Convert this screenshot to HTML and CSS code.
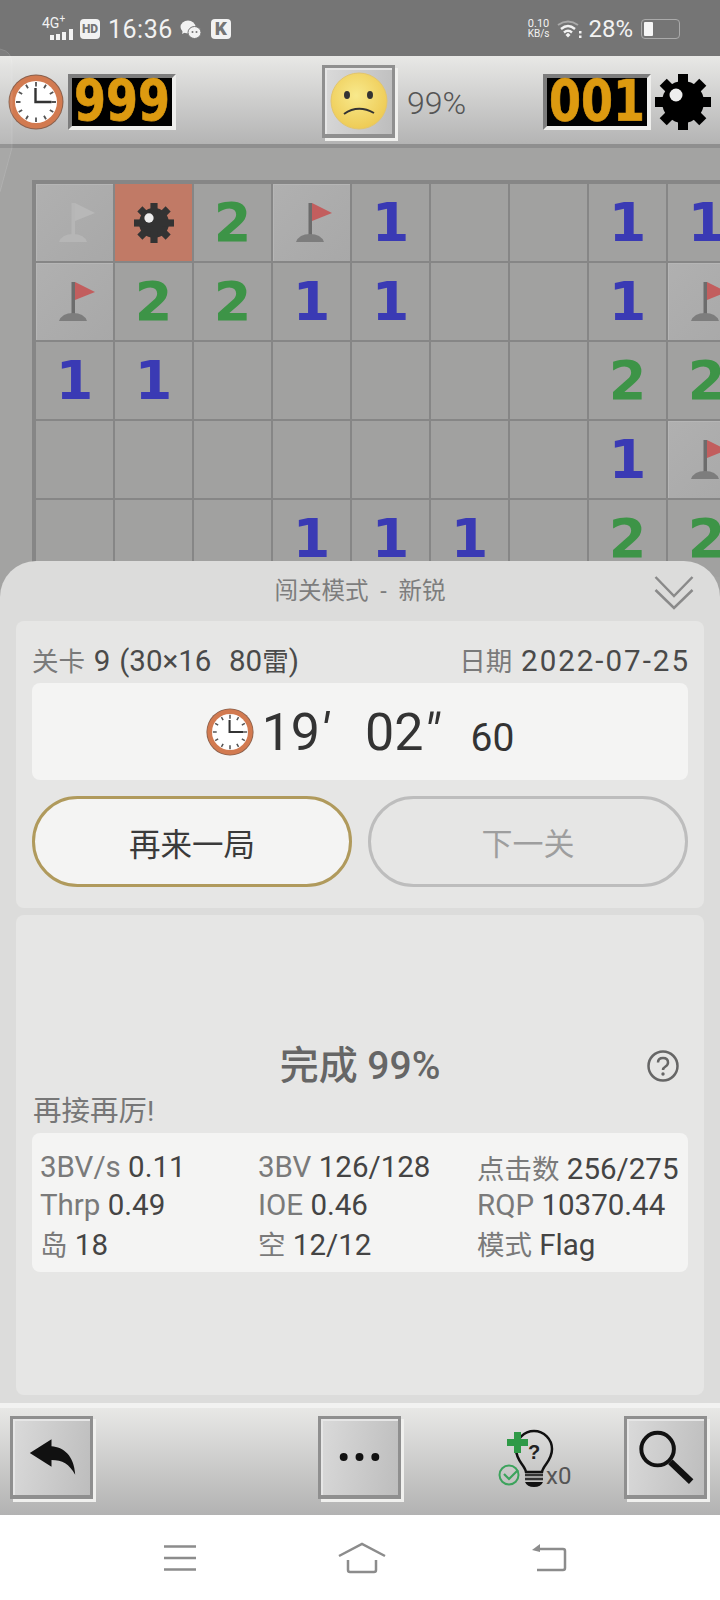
FILE: index.html
```html
<!DOCTYPE html>
<html lang="zh-CN">
<head>
  <meta charset="UTF-8" />
  <title>扫雷</title>
  <link rel="stylesheet" href="styles.css">
</head>
<body>
  <svg class="defs" width="0" height="0">
    <defs>
      <radialGradient id="face" cx="0.45" cy="0.4" r="0.6">
        <stop offset="0" stop-color="#f8e98c"/>
        <stop offset="1" stop-color="#eecb55"/>
      </radialGradient>
    </defs>
    <symbol id="clock" viewBox="0 0 56 56">
      <circle cx="28" cy="28" r="27.500" fill="#8a604c"/>
      <circle cx="28" cy="28" r="26.500" fill="#d27a50"/>
      <circle cx="28" cy="28" r="21" fill="#fff"/>
      <g stroke="#555" stroke-width="1.800">
        <path d="M28 8v4.500M28 43.500v4.500M8 28h4.500M43.500 28h4.500M18 10.700l2 3.500M38 10.700l-2 3.500M10.700 18l3.500 2M45.300 18l-3.500 2M10.700 38l3.500-2M45.300 38l-3.500-2M18 45.300l2-3.500M38 45.300l-2-3.500"/>
      </g>
      <path d="M27.500 14v14h16" fill="none" stroke="#333" stroke-width="2.400"/>
    </symbol>
    <symbol id="gear" viewBox="-28 -28 56 56">
      <circle r="21"/>
      <g>
        <rect x="-5" y="-28" width="10" height="56"/>
        <rect x="-5" y="-28" width="10" height="56" transform="rotate(45)"/>
        <rect x="-5" y="-28" width="10" height="56" transform="rotate(90)"/>
        <rect x="-5" y="-28" width="10" height="56" transform="rotate(135)"/>
      </g>
      <circle cx="-7" cy="-7" r="6.500" fill="#eee"/>
    </symbol>
    <symbol id="flag" viewBox="0 0 77 77">
      <rect x="35.500" y="19" width="3.500" height="32" fill="#6c6c6c"/>
      <path d="M39 19L59 29L39 37Z" fill="#c25e5e"/>
      <path d="M23 58Q26 50 37 50Q48 50 51 58Z" fill="#7d7d7d"/>
    </symbol>
    <symbol id="flag-faint" viewBox="0 0 77 77">
      <rect x="35.500" y="19" width="3.500" height="32" fill="#b6b6b6"/>
      <path d="M39 19L59 29L39 37Z" fill="#b8b8b8"/>
      <path d="M23 58Q26 50 37 50Q48 50 51 58Z" fill="#b6b6b6"/>
    </symbol>
  </svg>

  <svg class="edge-handle" width="14" height="146" viewBox="0 0 14 146"><path d="M0 1Q12 3 12 16V100L0 144" fill="#fff" fill-opacity="0.06" stroke="#fff" stroke-opacity="0.12"/></svg>

  <div class="statusbar">
    <div class="status-left">
      <div class="signal">
        <span class="net">4G<sup>+</sup></span>
        <svg class="bars" width="24" height="11" viewBox="0 0 24 11"><path d="M0 6h4v5H0zM6 5h4v6H6zM12 3h4v8h-4zM19 0h4v11h-4z" fill="#f2f2f2"/></svg>
      </div>
      <span class="chip">HD</span>
      <span class="time">16:36</span>
      <svg class="wechat" width="21" height="21" viewBox="0 0 21 21">
        <ellipse cx="8" cy="8" rx="7.500" ry="6.500" fill="#f2f2f2"/>
        <path d="M3 11l-1 4 4-2z" fill="#f2f2f2"/>
        <ellipse cx="14.500" cy="13.500" rx="6.500" ry="6" fill="#f2f2f2" stroke="#757575"/>
        <circle cx="12.500" cy="13" r="1" fill="#757575"/>
        <circle cx="16.500" cy="13" r="1" fill="#757575"/>
      </svg>
      <span class="chip chip-k">K</span>
    </div>
    <div class="status-right">
      <span class="speed">0.10<br><small>KB/s</small></span>
      <svg class="wifi" width="25" height="20" viewBox="0 0 25 20">
        <path d="M1 6Q11-1 21 6" fill="none" stroke="#a9a9a9" stroke-width="2"/>
        <path d="M4 10Q11 4 18 10" fill="none" stroke="#f2f2f2" stroke-width="2.400"/>
        <path d="M7 13.500Q11 10 15 13.500" fill="none" stroke="#f2f2f2" stroke-width="2.400"/>
        <path d="M8.500 16L11 13.800 13.500 16 11 18.500Z" fill="#f2f2f2"/>
        <path d="M22 12h2.500v2.500H22zM22 16.500h2.500V19H22z" fill="#f2f2f2"/>
      </svg>
      <span class="battery-text">28%</span>
      <div class="battery"><div class="battery-level" style="width: 28%"></div></div>
    </div>
  </div>

  <div class="topbar">
    <svg class="clock-big"><use href="#clock"/></svg>
    <div class="counter"><span>999</span></div>
    <button class="bevel-btn smiley-btn">
      <svg width="58" height="58" viewBox="0 0 58 58">
        <circle cx="29" cy="29" r="28" fill="url(#face)" stroke="#e3c56c"/>
        <ellipse cx="17" cy="23" rx="3" ry="4" fill="#333"/>
        <ellipse cx="40" cy="23" rx="3" ry="4" fill="#333"/>
        <path d="M14 42Q28 32 44 41" fill="none" stroke="#333" stroke-width="2"/>
      </svg>
    </button>
    <span class="percent">99%</span>
    <div class="counter counter-mines"><span>001</span></div>
    <svg class="gear-big"><use href="#gear"/></svg>
  </div>

  <div class="game">
    <div class="board">
      <div class="cell raised"><svg class="flag"><use href="#flag-faint"/></svg></div>
      <div class="cell boom"><svg class="mine"><use href="#gear"/></svg></div>
      <div class="cell n2">2</div>
      <div class="cell raised"><svg class="flag"><use href="#flag"/></svg></div>
      <div class="cell n1">1</div>
      <div class="cell"></div>
      <div class="cell"></div>
      <div class="cell n1">1</div>
      <div class="cell n1">1</div>

      <div class="cell raised"><svg class="flag"><use href="#flag"/></svg></div>
      <div class="cell n2">2</div>
      <div class="cell n2">2</div>
      <div class="cell n1">1</div>
      <div class="cell n1">1</div>
      <div class="cell"></div>
      <div class="cell"></div>
      <div class="cell n1">1</div>
      <div class="cell raised"><svg class="flag"><use href="#flag"/></svg></div>

      <div class="cell n1">1</div>
      <div class="cell n1">1</div>
      <div class="cell"></div>
      <div class="cell"></div>
      <div class="cell"></div>
      <div class="cell"></div>
      <div class="cell"></div>
      <div class="cell n2">2</div>
      <div class="cell n2">2</div>

      <div class="cell"></div>
      <div class="cell"></div>
      <div class="cell"></div>
      <div class="cell"></div>
      <div class="cell"></div>
      <div class="cell"></div>
      <div class="cell"></div>
      <div class="cell n1">1</div>
      <div class="cell raised"><svg class="flag"><use href="#flag"/></svg></div>

      <div class="cell"></div>
      <div class="cell"></div>
      <div class="cell"></div>
      <div class="cell n1">1</div>
      <div class="cell n1">1</div>
      <div class="cell n1">1</div>
      <div class="cell"></div>
      <div class="cell n2">2</div>
      <div class="cell n2">2</div>
    </div>

    <section class="sheet">
      <header class="sheet-head">
        <span>闯关模式 - 新锐</span>
        <svg class="chevrons" width="40" height="35" viewBox="0 0 40 35"><path d="M1.500 2L20 21 38.500 2M1.500 15L20 33 38.500 15" fill="none" stroke="#8a8a8a" stroke-width="2.500"/></svg>
      </header>

      <div class="card result">
        <div class="result-row">
          <span><i class="zh">关卡</i> 9 (30×16&nbsp;&nbsp;80<span class="zh">雷</span>)</span>
          <span><i class="zh">日期</i> <span class="date">2022-07-25</span></span>
        </div>
        <div class="time-box">
          <svg class="clock-small"><use href="#clock"/></svg>
          <span class="min">19<em>′</em></span>
          <span class="sec">02<em>″</em></span>
          <span class="ms">60</span>
        </div>
        <div class="actions">
          <button class="pill pill-on">再来一局</button>
          <button class="pill pill-off">下一关</button>
        </div>
      </div>

      <div class="card summary">
        <div class="summary-title">
          <h2>完成 99%</h2>
          <svg class="help" width="32" height="32" viewBox="0 0 32 32">
            <circle cx="16" cy="16" r="14.500" fill="none" stroke="#666" stroke-width="2.500"/>
            <path d="M11 12.500Q11 8 16 8T21 12.500Q21 15 18.500 16.500T16 20" fill="none" stroke="#666" stroke-width="2.500"/>
            <circle cx="16" cy="24" r="1.700" fill="#666"/>
          </svg>
        </div>
        <p class="cheer">再接再厉!</p>
        <div class="stats">
          <span><i>3BV/s</i> 0.11</span>
          <span><i>3BV</i> 126/128</span>
          <span><i class="zh">点击数</i> 256/275</span>
          <span><i>Thrp</i> 0.49</span>
          <span><i>IOE</i> 0.46</span>
          <span><i>RQP</i> 10370.44</span>
          <span><i class="zh">岛</i> 18</span>
          <span><i class="zh">空</i> 12/12</span>
          <span><i class="zh">模式</i> Flag</span>
        </div>
      </div>
    </section>
  </div>

  <div class="toolbar">
    <button class="bevel-btn tool">
      <svg width="78" height="78" viewBox="0 0 78 78"><path d="M17 35L39 21V28C51 29 62 37 63 57C57 46 50 42 39 42V49Z" fill="#111"/></svg>
    </button>
    <button class="bevel-btn tool tool-more">
      <svg width="78" height="78" viewBox="0 0 78 78"><circle cx="23" cy="39" r="4" fill="#111"/><circle cx="39" cy="39" r="4" fill="#111"/><circle cx="55" cy="39" r="4" fill="#111"/></svg>
    </button>
    <div class="hint">
      <svg width="64" height="64" viewBox="0 0 64 64">
        <path d="M31 44C30 37 21 33 21 21A18 18 0 0 1 57 21C57 33 48 37 47 44Z" fill="none" stroke="#111" stroke-width="2.500"/>
        <path d="M30 47h18M30 51h18" stroke="#333" stroke-width="2.500"/>
        <path d="M30 54h18Q46 59 39 59T30 54Z" fill="#111"/>
        <path d="M19 4h7v7h7v7h-7v7h-7v-7h-7v-7h7z" fill="#2f9a47"/>
        <circle cx="14" cy="47" r="9.500" fill="none" stroke="#3ca35c" stroke-width="2"/>
        <path d="M9 46l5 5 9-9" fill="none" stroke="#3ca35c" stroke-width="2.200"/>
        <text x="39" y="31" text-anchor="middle" font-family="Liberation Sans" font-weight="700" font-size="20" fill="#222">?</text>
      </svg>
      <span class="hint-count">x0</span>
    </div>
    <button class="bevel-btn tool">
      <svg width="78" height="78" viewBox="0 0 78 78"><circle cx="31" cy="31" r="16.500" fill="none" stroke="#111" stroke-width="4"/><path d="M44 44L65 64" stroke="#111" stroke-width="6.500"/></svg>
    </button>
  </div>

  <nav class="navbar">
    <svg width="36" height="28" viewBox="0 0 36 28"><path d="M2 2.500h32M2 14h32M2 25.500h32" stroke="#8c8c8c" stroke-width="2.500"/></svg>
    <svg class="nav-home" width="48" height="32" viewBox="0 0 48 32"><path d="M1 14L24 2 47 14M10 18V28Q10 30 12 30H36Q38 30 38 28V18" fill="none" stroke="#8c8c8c" stroke-width="2.500"/></svg>
    <svg class="nav-back" width="36" height="30" viewBox="0 0 36 30"><path d="M7 6H32Q34 6 34 8V25Q34 27 32 27H6" fill="none" stroke="#8c8c8c" stroke-width="2.500"/><path d="M1 7L9 1V9Z" fill="#8c8c8c"/></svg>
  </nav>
</body>
</html>
```

FILE: styles.css
```css
* { box-sizing: border-box; }
html, body { margin: 0; padding: 0; }
body {
  width: 720px;
  height: 1600px;
  overflow: hidden;
  background: #fff;
  font-family: Roboto, "Noto Sans CJK SC", sans-serif;
  color: #444;
}
i { font-style: normal; color: #7a7a7a; }
button { font-family: inherit; padding: 0; margin: 0; cursor: pointer; }
.defs { position: absolute; }
.edge-handle { position: absolute; left: 0; top: 48px; z-index: 2; }
.zh { font-size: 26.500px; }

/* status bar */
.statusbar {
  height: 56px;
  background: #757575;
  color: #f2f2f2;
  display: flex;
  justify-content: space-between;
  padding: 0 40px 0 42px;
}
.status-left, .status-right { display: flex; align-items: center; padding-top: 2px; }
.signal { width: 32px; height: 26px; flex: none; }
.net { font-size: 14px; line-height: 14px; display: block; }
.net sup { font-size: 10px; line-height: 0; }
.bars { display: block; margin-left: 8px; margin-top: -1px; }
.chip {
  flex: none;
  width: 20px;
  height: 20px;
  margin-left: 6px;
  background: #f2f2f2;
  color: #757575;
  border-radius: 4px;
  font-size: 12px;
  font-weight: 900;
  line-height: 20px;
  text-align: center;
}
.chip-k { font-size: 19px; margin-left: 10px; }
.time { font-size: 25px; margin-left: 8px; letter-spacing: 0.5px; }
.wechat { margin-left: 7px; }
.speed { font-size: 11px; line-height: 10px; text-align: center; }
.speed small { font-size: 10px; }
.wifi { margin-left: 8px; }
.battery-text { font-size: 24px; margin-left: 6px; }
.battery {
  width: 39px;
  height: 20px;
  margin-left: 8px;
  border: 1.500px solid #aaa;
  border-radius: 4px;
  padding: 2px;
}
.battery-level { height: 100%; background: #f6f6f6; border-radius: 1px; }

/* top bar */
.topbar {
  height: 92px;
  padding: 8px 0 0 8px;
  background: linear-gradient(#e8e8e6, #b4b4b4);
  border-bottom: 4px solid #8f8f8f;
  display: flex;
  align-items: flex-start;
}
.clock-big { width: 56px; height: 56px; margin-top: 10px; flex: none; }
.gear-big { width: 56px; height: 56px; margin: 10px 0 0 4px; flex: none; }
.counter {
  width: 108px;
  height: 56px;
  margin: 10px 0 0 4px;
  background: #000;
  border: 4px solid;
  border-color: #7d7d7d #eeeeec #eeeeec #7d7d7d;
  text-align: center;
  color: #dd9a10;
  font: 700 46px/47px "DejaVu Sans", sans-serif;
  -webkit-text-stroke: 0.6px #dd9a10;
  flex: none;
}
.counter span { display: inline-block; transform: scaleY(1.25); }
.bevel-btn {
  display: flex;
  align-items: center;
  justify-content: center;
  background: linear-gradient(100deg, #dadada, #bdbdbd);
  border: solid #8f8f8f;
  border-width: 3px 3px 4px 3px;
  box-shadow: inset 2px 2px 0 #e6e6e6, 3px 3px 0 #f0f0ee;
}
.smiley-btn { width: 73px; height: 73px; margin: 1px 0 0 146px; flex: none; }
.percent { font-size: 32px; font-weight: 300; color: #555; margin: 19px 0 0 12px; width: 62px; line-height: 40px; }
.counter-mines { margin-left: 74px; }

/* board */
.game {
  position: relative;
  height: 1255px;
  background: #a3a3a2;
  overflow: hidden;
}
.board {
  margin: 32px 0 0 32px;
  width: 740px;
  padding: 4px 0 0 4px;
  background: #868686;
  display: grid;
  grid-template-columns: repeat(9, 77px);
  grid-auto-rows: 77px;
  gap: 2px;
}
.cell {
  background: #a1a1a0;
  display: flex;
  align-items: center;
  justify-content: center;
  font: 700 54px/1 "DejaVu Sans", sans-serif;
}
.n1 { color: #3a3ab4; }
.n2 { color: #3d9447; }
.raised {
  background: linear-gradient(135deg, #b0b0b0, #a8a8a8);
  box-shadow: inset 1px 1px 0 #b6b6b6;
}
.boom { background: #c17a66; }
.flag { width: 77px; height: 77px; }
.mine { width: 40px; height: 40px; fill: #333; }

/* result sheet */
.sheet {
  position: absolute;
  left: 0;
  right: 0;
  bottom: 0;
  height: 842px;
  background: #dcdcdb;
  border-radius: 36px 36px 0 0;
  padding: 0 16px 8px;
  display: flex;
  flex-direction: column;
  gap: 7px;
}
.sheet-head {
  height: 53px;
  display: flex;
  align-items: center;
  justify-content: center;
  font-size: 23.500px;
  word-spacing: 6px;
  color: #7d7d7d;
  position: relative;
  padding-top: 2px;
}
.chevrons { position: absolute; right: 10px; top: 14px; }
.card { background: #e6e6e5; border-radius: 8px; }
.result { height: 287px; padding: 19px 16px 0; }
.result-row {
  height: 43px;
  padding-bottom: 4px;
  display: flex;
  justify-content: space-between;
  align-items: center;
  font-size: 29.500px;
  word-spacing: 1.500px;
  white-space: nowrap;
  color: #4a4a4a;
}
.date { letter-spacing: 2px; margin-right: -2px; }
.time-box {
  height: 97px;
  background: #f4f4f3;
  border-radius: 8px;
  display: flex;
  justify-content: center;
  align-items: center;
  color: #333;
}
.time-box em { font-weight: 400; }
.clock-small { width: 48px; height: 48px; margin-right: 8px; }
.min, .sec { font-size: 52px; line-height: 60px; margin-top: 3px; }
.sec { margin-left: 36px; }
.ms { font-size: 39px; margin-left: 31px; margin-top: 12px; }
.actions { display: flex; gap: 16px; margin-top: 16px; }
.pill {
  flex: 1;
  height: 91px;
  border-radius: 46px;
  font-size: 31px;
}
.pill-on { background: #f4f4f3; border: 3.500px solid #b09a5c; color: #3a3a3a; font-size: 31.500px; }
.pill-off { background: #e6e6e5; border: 3.500px solid #bdbdbd; color: #9e9e9e; }
.summary { flex: 1; padding: 127px 16px 0; }
.summary-title {
  height: 48px;
  display: grid;
  grid-template-columns: 1fr auto 1fr;
  align-items: center;
}
.summary-title h2 {
  grid-column: 2;
  margin: 0;
  font-size: 39px;
  line-height: 48px;
  font-weight: 500;
  color: #666;
}
.help { justify-self: end; margin: 0 9px 0 0; }
.cheer { margin: 3px 0 2px 1px; height: 38px; font-size: 28.500px; line-height: 38px; color: #777; }
.stats {
  height: 139px;
  background: #f4f4f3;
  border-radius: 8px;
  padding: 15px 0 0 8px;
  display: grid;
  grid-template-columns: 218px 219px 1fr;
  grid-auto-rows: 38px;
  align-items: center;
  font-size: 29.500px;
  white-space: nowrap;
  color: #444;
}
.stats .zh { font-size: 27.500px; }

/* bottom toolbar */
.toolbar {
  height: 112px;
  padding: 8px 0 0 10px;
  background: linear-gradient(#e8e8e6, #b2b2b2);
  border-top: 5px solid #f2f2f1;
  display: flex;
  align-items: flex-start;
}
.tool { width: 83px; height: 83px; flex: none; }
.tool-more { margin-left: 225px; }
.hint { width: 223px; height: 83px; padding: 12px 0 0 94px; flex: none; position: relative; }
.hint-count { position: absolute; left: 145px; top: 46px; font-size: 24px; line-height: 28px; color: #555; }

/* system nav */
.navbar {
  height: 85px;
  display: flex;
  align-items: center;
  padding: 0 0 0 162px;
}
.nav-home { margin-left: 140px; }
.nav-back { margin-left: 145px; }
```
